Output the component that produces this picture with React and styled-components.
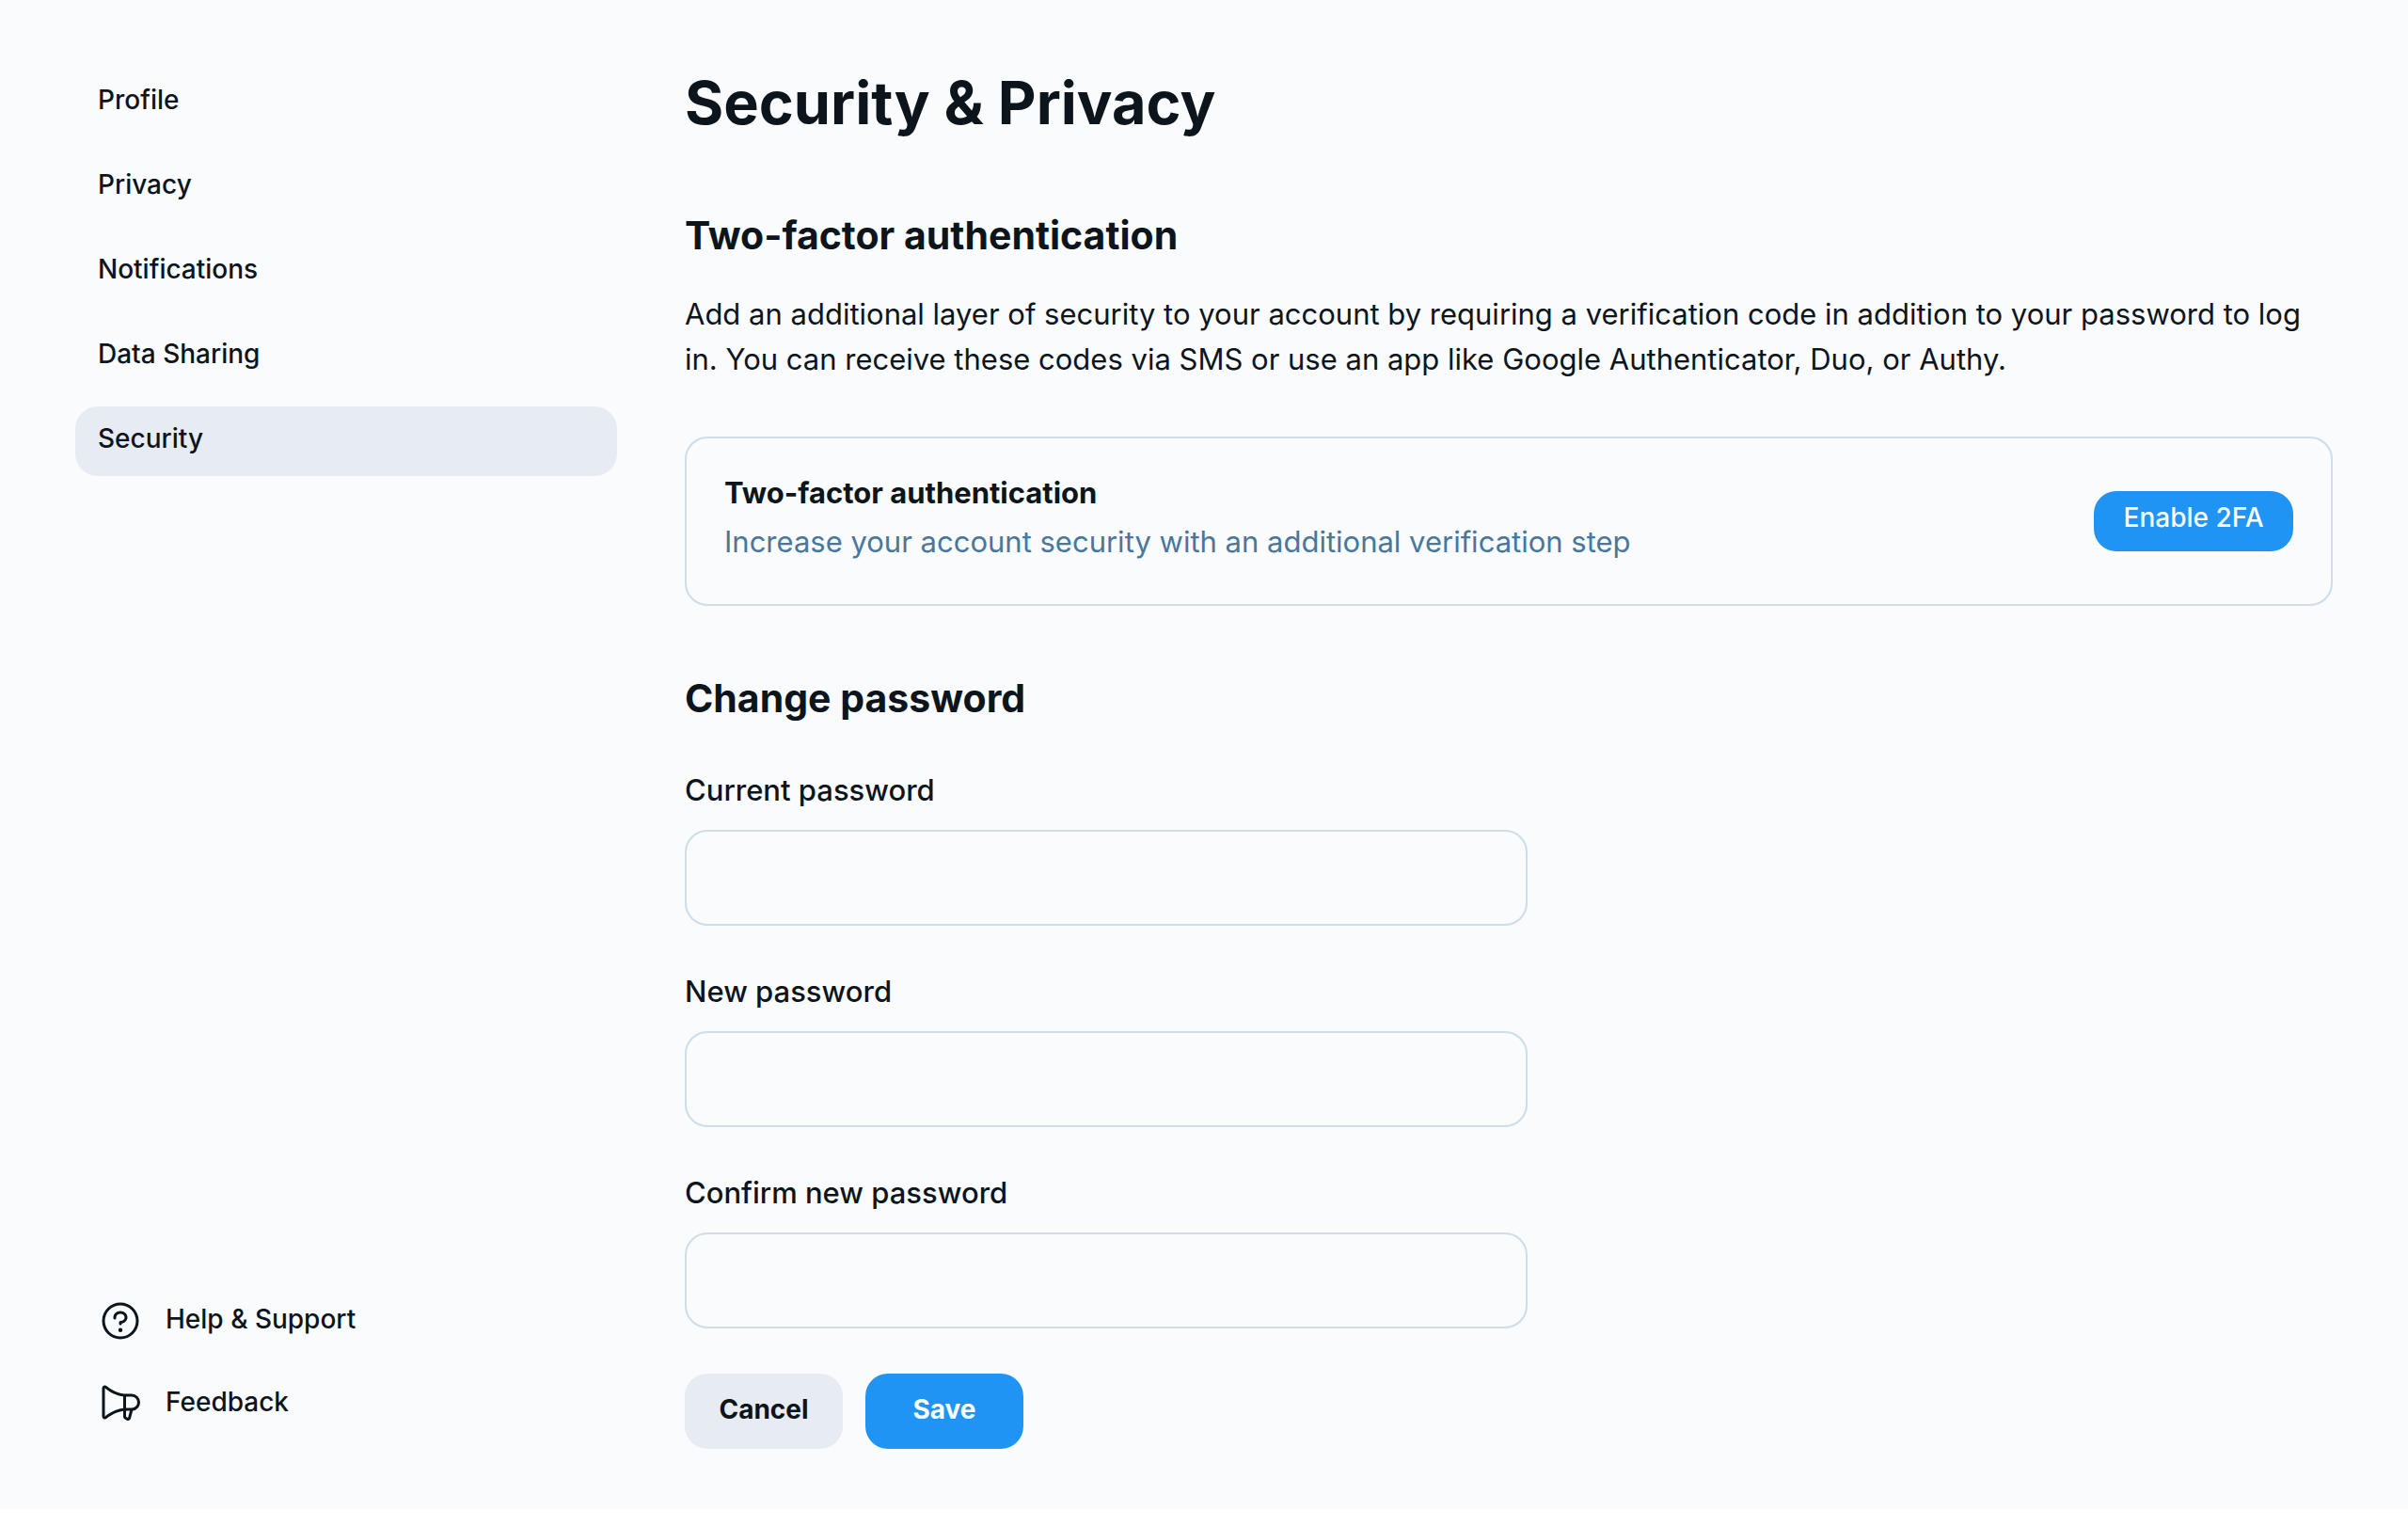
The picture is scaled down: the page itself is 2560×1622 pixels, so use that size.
import { useState } from "react";
import styled, { createGlobalStyle } from "styled-components";
import { PiQuestion } from "react-icons/pi";

const navItems = ["Profile", "Privacy", "Notifications", "Data Sharing", "Security"];

const passwordFields = [
  { id: "current", label: "Current password" },
  { id: "new", label: "New password" },
  { id: "confirm", label: "Confirm new password" },
];

const emptyForm = { current: "", new: "", confirm: "" };

const MegaphoneIcon = () => (
  <svg width="48" height="48" viewBox="0 0 256 256" fill="currentColor" aria-hidden="true">
    <path d="M240,120a48.05,48.05,0,0,0-48-48H152.2c-2.91-.17-53.62-3.74-101.91-44.24A16,16,0,0,0,24,40V200a16,16,0,0,0,26.29,12.25c37.77-31.68,77-40.76,93.71-43.3v31.72A16,16,0,0,0,151.12,214l11,7.33A16,16,0,0,0,186.5,212l11.77-44.36A48.07,48.07,0,0,0,240,120ZM40,199.93V40h0c42.81,35.91,86.63,45,104,47.24v65.48C126.65,155,82.84,164.07,40,199.93Zm131,8,0,.11-11-7.33V168h21.6ZM192,152H160V88h32a32,32,0,1,1,0,64Z" />
  </svg>
);

const App = () => {
  const [active, setActive] = useState("Security");
  const [form, setForm] = useState(emptyForm);

  const updateField = (id, value) => {
    setForm({ ...form, [id]: value });
  };

  return (
    <>
      <GlobalStyle />
      <Page>
        <Sidebar>
          <NavList>
            {navItems.map((item) => (
              <NavLink
                key={item}
                href="#"
                $active={item === active}
                onClick={() => setActive(item)}
              >
                {item}
              </NavLink>
            ))}
          </NavList>
          <FooterList>
            <FooterLink href="#">
              <PiQuestion size={48} />
              <FooterText>Help & Support</FooterText>
            </FooterLink>
            <FooterLink href="#">
              <MegaphoneIcon />
              <FooterText>Feedback</FooterText>
            </FooterLink>
          </FooterList>
        </Sidebar>
        <Main>
          <Title>Security & Privacy</Title>
          <SectionTitle>Two-factor authentication</SectionTitle>
          <Text>
            Add an additional layer of security to your account by requiring a
            verification code in addition to your password to log in. You can
            receive these codes via SMS or use an app like Google Authenticator,
            Duo, or Authy.
          </Text>
          <Card>
            <CardBody>
              <CardTitle>Two-factor authentication</CardTitle>
              <CardText>
                Increase your account security with an additional verification
                step
              </CardText>
            </CardBody>
            <EnableButton type="button">Enable 2FA</EnableButton>
          </Card>
          <SectionTitle>Change password</SectionTitle>
          <Form onSubmit={(e) => e.preventDefault()}>
            {passwordFields.map(({ id, label }) => (
              <Field key={id}>
                <Label htmlFor={id}>{label}</Label>
                <Input
                  id={id}
                  type="password"
                  value={form[id]}
                  onChange={(e) => updateField(id, e.target.value)}
                />
              </Field>
            ))}
            <Actions>
              <ActionButton type="button" onClick={() => setForm(emptyForm)}>
                Cancel
              </ActionButton>
              <ActionButton type="submit" $primary>
                Save
              </ActionButton>
            </Actions>
          </Form>
        </Main>
      </Page>
    </>
  );
};

export default App;

const GlobalStyle = createGlobalStyle`
  * {
    box-sizing: border-box;
  }
  body {
    margin: 0;
    background-color: white;
    color: #0d151c;
    font-family: Inter, "Liberation Sans", sans-serif;
  }
  button, input {
    font-family: inherit;
  }
`;

const Page = styled.div`
  display: flex;
  gap: 72px;
  padding: 0 80px;
  background-color: #f9fbfd;
`;

const Sidebar = styled.aside`
  display: flex;
  flex-direction: column;
  justify-content: space-between;
  flex: 0 0 576px;
  padding: 72px 0;
`;

const NavList = styled.nav`
  display: flex;
  flex-direction: column;
  gap: 16px;
`;

const NavLink = styled.a`
  padding: 16px 24px 22px;
  border-radius: 24px;
  background-color: ${(props) => (props.$active ? "#e7ecf3" : "transparent")};
  color: inherit;
  font-size: 28px;
  font-weight: 500;
  line-height: 36px;
  text-decoration: none;
`;

const FooterList = styled.div`
  display: flex;
  flex-direction: column;
  gap: 8px;
`;

const FooterLink = styled.a`
  display: flex;
  align-items: center;
  gap: 24px;
  padding: 16px 24px;
  color: inherit;
  font-size: 28px;
  font-weight: 500;
  line-height: 42px;
  text-decoration: none;
`;

const FooterText = styled.span`
  padding-bottom: 4px;
`;

const Main = styled.main`
  flex: 1;
  min-width: 0;
  padding: 64px 0;
`;

const Title = styled.h1`
  margin: 0 0 56px;
  font-size: 63px;
  font-weight: 700;
  line-height: 90px;
`;

const SectionTitle = styled.h2`
  margin: 0 0 20px;
  font-size: 41px;
  font-weight: 700;
  line-height: 80px;
`;

const Text = styled.p`
  margin: 0 0 58px;
  font-size: 31px;
  line-height: 48px;
`;

const Card = styled.section`
  display: flex;
  align-items: center;
  justify-content: space-between;
  margin-bottom: 58px;
  padding: 34px 40px;
  border: 2px solid #cedde8;
  border-radius: 24px;
`;

const CardBody = styled.div`
  padding-bottom: 8px;
`;

const CardTitle = styled.h3`
  margin: 0 0 4px;
  font-size: 31px;
  font-weight: 700;
  line-height: 48px;
`;

const CardText = styled.p`
  margin: 0;
  color: #49779c;
  font-size: 31px;
  line-height: 48px;
`;

const EnableButton = styled.button`
  width: 212px;
  height: 64px;
  padding: 0 0 8px;
  border: none;
  border-radius: 24px;
  background-color: #2094f3;
  color: #f9fbfd;
  cursor: pointer;
  font-size: 28px;
  font-weight: 500;
`;

const Form = styled.form`
  max-width: 896px;
  padding-top: 14px;
`;

const Field = styled.div`
  display: flex;
  flex-direction: column;
  gap: 18px;
  margin-bottom: 46px;

  &:nth-last-child(2) {
    margin-bottom: 48px;
  }
`;

const Label = styled.label`
  font-size: 31px;
  font-weight: 500;
  line-height: 48px;
`;

const Input = styled.input`
  height: 102px;
  padding: 0 30px;
  border: 2px solid #cedde8;
  border-radius: 24px;
  background-color: transparent;
  color: inherit;
  font-size: 31px;
`;

const Actions = styled.div`
  display: flex;
  gap: 24px;
`;

const ActionButton = styled.button`
  width: 168px;
  height: 80px;
  padding: 0 0 4px;
  border: none;
  border-radius: 24px;
  background-color: ${(props) => (props.$primary ? "#2094f3" : "#e7ecf3")};
  color: ${(props) => (props.$primary ? "#f9fbfd" : "inherit")};
  cursor: pointer;
  font-size: 28px;
  font-weight: 700;
`;
